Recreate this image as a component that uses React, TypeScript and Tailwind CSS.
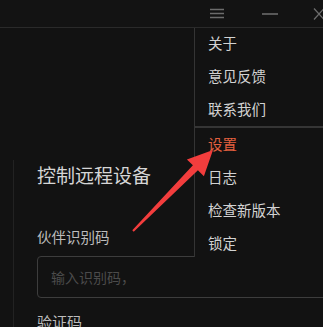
const FONT = { fontFamily: '"Noto Sans CJK SC", "Noto Sans", sans-serif' };

const group1 = ["关于", "意见反馈", "联系我们"];
const group2 = ["设置", "日志", "检查新版本", "锁定"];

function MenuItem({ label, active }: { label: string; active?: boolean }) {
  return (
    <div
      className={`flex h-[33px] items-center pl-[13px] text-[14.5px] leading-none ${
        active ? "text-[#e3603f]" : "text-[#d2d2d2]"
      }`}
    >
      {label}
    </div>
  );
}

function TopBar() {
  return (
    <div className="flex h-[28px] items-center justify-end border-b border-[#2a2a2a] bg-[#131313]">
      <svg width={16} height={12} viewBox="0 0 16 12" className="mr-[36px]">
        <path d="M1 1.5h14M1 5.5h14M1 9.5h14" stroke="#6c6c6c" strokeWidth={1.4} />
      </svg>
      <svg width={18} height={4} viewBox="0 0 18 4" className="mr-[34px]">
        <path d="M1 2h16" stroke="#777" strokeWidth={1.4} />
      </svg>
      <svg width={14} height={12} viewBox="0 0 14 12" className="-mr-[4px]">
        <path d="M1 0.5l10 11M11 0.5l-10 11" stroke="#6c6c6c" strokeWidth={1.3} />
      </svg>
    </div>
  );
}

function Arrow() {
  return (
    <svg
      width={323}
      height={327}
      viewBox="0 0 323 327"
      className="pointer-events-none absolute left-0 top-0"
    >
      <polygon
        points="132.3,230.3 192.9,165.3 186.9,159.4 213,150 203.9,176.2 197.9,170.3 133.7,231.7"
        fill="#f23d3d"
      />
    </svg>
  );
}

export default function App() {
  return (
    <div
      className="relative h-[327px] w-[323px] overflow-hidden bg-[#121212]"
      style={FONT}
    >
      <TopBar />

      {/* 主体面板 */}
      <div className="ml-[13px] mt-[132px] border-l border-[#222] pl-[23px] pt-[3px]">
        <p className="text-[19px] leading-[24px] text-[#d6d6d6]">控制远程设备</p>
        <p className="mt-[40px] text-[14.5px] leading-[20px] text-[#bdbdbd]">伙伴识别码</p>
        <div className="mt-[9px] flex h-[42px] w-[320px] items-center rounded-[4px] border border-[#3d3d3d] pl-[13px] text-[14px] text-[#4b4b4b]">
          输入识别码，
        </div>
        <p className="mt-[14px] text-[15px] leading-[20px] text-[#bdbdbd]">验证码</p>
      </div>

      {/* 下拉菜单 */}
      <div className="absolute left-[194px] right-0 top-[28px] h-[229px] overflow-hidden border-l border-[#343434] bg-[#121212]">
        <div className="-mt-[1px]">
          {group1.map((l) => (
            <MenuItem key={l} label={l} />
          ))}
        </div>
        <div className="h-[2px] bg-[#353535]" />
        {group2.map((l, i) => (
          <MenuItem key={l} label={l} active={i === 0} />
        ))}
      </div>

      <Arrow />
    </div>
  );
}
